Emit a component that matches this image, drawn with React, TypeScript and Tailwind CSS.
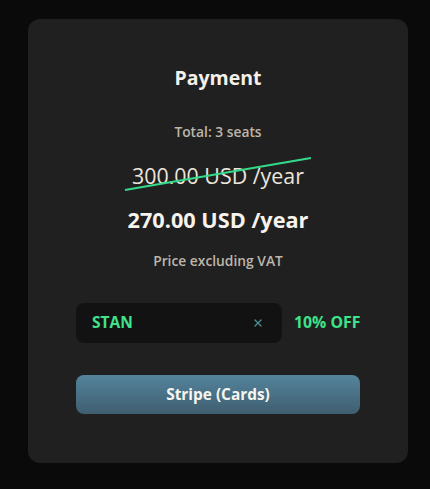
import { X } from 'lucide-react';

export default function App() {
  return (
    <div className="min-h-[489px] w-full bg-[#0a0a0a] pt-[19px] font-['Open_Sans',sans-serif]">
      <div className="ml-[28px] flex h-[444px] w-[380px] flex-col items-center rounded-xl bg-[#202020] px-12 pt-[45px]">
        <h2 className="text-[19.5px] leading-7 font-bold text-[#f5f1ea]">Payment</h2>

        <p className="mt-[30px] text-[13.8px] leading-5 font-semibold text-[#bdb6ab]">Total: 3 seats</p>

        {/* old price, crossed out with a slanted line */}
        <div className="relative mt-5">
          <span className="text-[21.4px] leading-7 text-[#ece6dc]">300.00 USD /year</span>
          <svg
            className="absolute -top-[4px] -left-[7px] h-8 w-[calc(100%+14px)] overflow-visible"
            viewBox="0 0 100 32"
            preserveAspectRatio="none"
          >
            <line x1="0" y1="32" x2="100" y2="0" stroke="#34d98a" strokeWidth="2" vectorEffect="non-scaling-stroke" />
          </svg>
        </div>

        <p className="mt-4 text-[21.7px] leading-7 font-bold text-[#f7f3ec]">270.00 USD /year</p>

        <p className="mt-[17px] text-[13.8px] leading-5 font-semibold text-[#bdb6ab]">Price excluding VAT</p>

        <div className="mt-8 flex w-full items-center gap-3">
          <div className="flex h-10 w-[206px] shrink-0 items-center justify-between rounded-lg bg-[#121212] pr-[18px] pl-4">
            <span className="text-[15.5px] font-bold text-[#3ee38c]">STAN</span>
            <X className="h-3 w-3 text-[#4f8f96]" strokeWidth={2.5} />
          </div>
          <span className="text-[15.8px] whitespace-nowrap font-bold text-[#3ee38c]">10% OFF</span>
        </div>

        <button className="mt-8 h-[39px] w-full rounded-lg bg-gradient-to-b from-[#54849c] to-[#3f5e70] text-[15.4px] font-bold text-[#f7f5f0]">
          Stripe (Cards)
        </button>
      </div>
    </div>
  );
}
